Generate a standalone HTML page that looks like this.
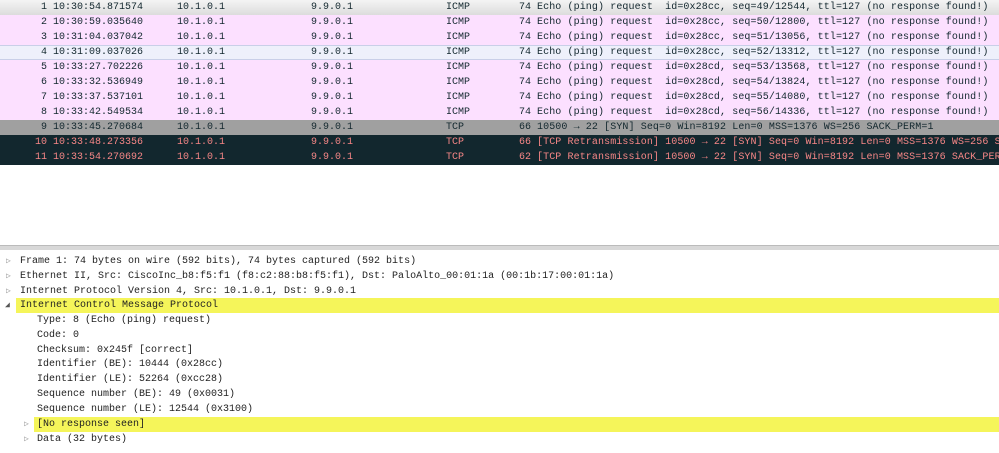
<!DOCTYPE html>
<html><head><style>
body{margin:0;width:999px;height:453px;background:#fff;font-family:"Liberation Mono",monospace;font-size:10px;overflow:hidden;position:relative}
.r{position:absolute;left:0;width:999px;height:15px;line-height:15px;white-space:pre;background:#fce0ff;color:#12272e;overflow:hidden}
.r span{position:absolute;top:0}
.n{right:952px;text-align:right}
.t{left:53px}.s{left:177px}.d{left:311px}.p{left:446px}.l{right:468px}.i{left:537px;letter-spacing:0.1px}
.sel{background:linear-gradient(#f4f4f4,#dcdcdc);border-bottom:1px solid #c8c8c8}
.hl{background:#eef0fb;border-top:1px solid #c9cfe8;border-bottom:1px solid #c9cfe8;height:13px;line-height:13px}
.g{background:#a0a0a0;color:#12272e}
.k{background:#12272e;color:#f78787}
.sep{position:absolute;left:0;top:245px;width:999px;height:4px;background:#d8d8d8;border-top:1px solid #bbb}
.dl{position:absolute;left:0;width:999px;height:15px;line-height:15px;white-space:pre;color:#222;overflow:hidden}
.dl b{font-weight:normal;position:absolute;top:0}
.y{background:#f5f55a}
.tri{color:#999;font-size:8px}
</style></head><body>
<div class="r sel" style="top:0"><span class="n">1</span><span class="t">10:30:54.871574</span><span class="s">10.1.0.1</span><span class="d">9.9.0.1</span><span class="p">ICMP</span><span class="l">74</span><span class="i">Echo (ping) request  id=0x28cc, seq=49/12544, ttl=127 (no response found!)</span></div>
<div class="r" style="top:15px"><span class="n">2</span><span class="t">10:30:59.035640</span><span class="s">10.1.0.1</span><span class="d">9.9.0.1</span><span class="p">ICMP</span><span class="l">74</span><span class="i">Echo (ping) request  id=0x28cc, seq=50/12800, ttl=127 (no response found!)</span></div>
<div class="r" style="top:30px"><span class="n">3</span><span class="t">10:31:04.037042</span><span class="s">10.1.0.1</span><span class="d">9.9.0.1</span><span class="p">ICMP</span><span class="l">74</span><span class="i">Echo (ping) request  id=0x28cc, seq=51/13056, ttl=127 (no response found!)</span></div>
<div class="r hl" style="top:45px"><span class="n">4</span><span class="t">10:31:09.037026</span><span class="s">10.1.0.1</span><span class="d">9.9.0.1</span><span class="p">ICMP</span><span class="l">74</span><span class="i">Echo (ping) request  id=0x28cc, seq=52/13312, ttl=127 (no response found!)</span></div>
<div class="r" style="top:60px"><span class="n">5</span><span class="t">10:33:27.702226</span><span class="s">10.1.0.1</span><span class="d">9.9.0.1</span><span class="p">ICMP</span><span class="l">74</span><span class="i">Echo (ping) request  id=0x28cd, seq=53/13568, ttl=127 (no response found!)</span></div>
<div class="r" style="top:75px"><span class="n">6</span><span class="t">10:33:32.536949</span><span class="s">10.1.0.1</span><span class="d">9.9.0.1</span><span class="p">ICMP</span><span class="l">74</span><span class="i">Echo (ping) request  id=0x28cd, seq=54/13824, ttl=127 (no response found!)</span></div>
<div class="r" style="top:90px"><span class="n">7</span><span class="t">10:33:37.537101</span><span class="s">10.1.0.1</span><span class="d">9.9.0.1</span><span class="p">ICMP</span><span class="l">74</span><span class="i">Echo (ping) request  id=0x28cd, seq=55/14080, ttl=127 (no response found!)</span></div>
<div class="r" style="top:105px"><span class="n">8</span><span class="t">10:33:42.549534</span><span class="s">10.1.0.1</span><span class="d">9.9.0.1</span><span class="p">ICMP</span><span class="l">74</span><span class="i">Echo (ping) request  id=0x28cd, seq=56/14336, ttl=127 (no response found!)</span></div>
<div class="r g" style="top:120px"><span class="n">9</span><span class="t">10:33:45.270684</span><span class="s">10.1.0.1</span><span class="d">9.9.0.1</span><span class="p">TCP</span><span class="l">66</span><span class="i">10500 → 22 [SYN] Seq=0 Win=8192 Len=0 MSS=1376 WS=256 SACK_PERM=1</span></div>
<div class="r k" style="top:135px"><span class="n">10</span><span class="t">10:33:48.273356</span><span class="s">10.1.0.1</span><span class="d">9.9.0.1</span><span class="p">TCP</span><span class="l">66</span><span class="i">[TCP Retransmission] 10500 → 22 [SYN] Seq=0 Win=8192 Len=0 MSS=1376 WS=256 SACK_PERM=1</span></div>
<div class="r k" style="top:150px"><span class="n">11</span><span class="t">10:33:54.270692</span><span class="s">10.1.0.1</span><span class="d">9.9.0.1</span><span class="p">TCP</span><span class="l">62</span><span class="i">[TCP Retransmission] 10500 → 22 [SYN] Seq=0 Win=8192 Len=0 MSS=1376 SACK_PERM=1</span></div>
<div class="sep"></div>
<div class="dl" style="top:254px"><b class="tri" style="left:6px">▷</b><b style="left:20px">Frame 1: 74 bytes on wire (592 bits), 74 bytes captured (592 bits)</b></div>
<div class="dl" style="top:269px"><b class="tri" style="left:6px">▷</b><b style="left:20px">Ethernet II, Src: CiscoInc_b8:f5:f1 (f8:c2:88:b8:f5:f1), Dst: PaloAlto_00:01:1a (00:1b:17:00:01:1a)</b></div>
<div class="dl" style="top:284px"><b class="tri" style="left:6px">▷</b><b style="left:20px">Internet Protocol Version 4, Src: 10.1.0.1, Dst: 9.9.0.1</b></div>
<div class="dl" style="top:298px"><b class="tri" style="left:5px;color:#555">◢</b><b class="y" style="left:16px;width:983px;padding-left:4px">Internet Control Message Protocol</b></div>
<div class="dl" style="top:313px"><b style="left:37px">Type: 8 (Echo (ping) request)</b></div>
<div class="dl" style="top:328px"><b style="left:37px">Code: 0</b></div>
<div class="dl" style="top:343px"><b style="left:37px">Checksum: 0x245f [correct]</b></div>
<div class="dl" style="top:357px"><b style="left:37px">Identifier (BE): 10444 (0x28cc)</b></div>
<div class="dl" style="top:372px"><b style="left:37px">Identifier (LE): 52264 (0xcc28)</b></div>
<div class="dl" style="top:387px"><b style="left:37px">Sequence number (BE): 49 (0x0031)</b></div>
<div class="dl" style="top:402px"><b style="left:37px">Sequence number (LE): 12544 (0x3100)</b></div>
<div class="dl" style="top:417px"><b class="tri" style="left:24px">▷</b><b class="y" style="left:34px;width:965px;padding-left:3px">[No response seen]</b></div>
<div class="dl" style="top:432px"><b class="tri" style="left:24px">▷</b><b style="left:37px">Data (32 bytes)</b></div>
</body></html>
